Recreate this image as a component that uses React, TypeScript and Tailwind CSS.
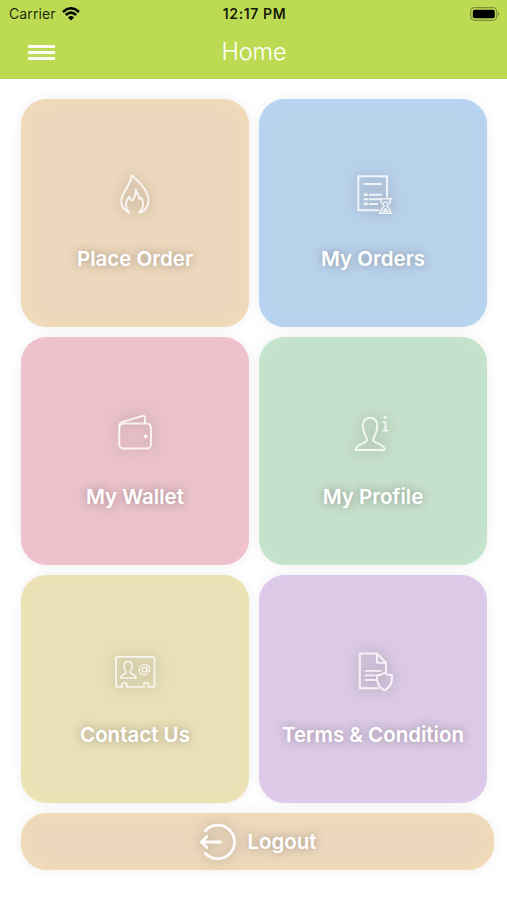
import type { ReactNode } from "react";

function FlameIcon() {
  return (
    <>
      <path d="M17 41C12 38 9.8 33.5 10.4 28.5C11.2 20.5 19.8 14.8 20.6 4.2C27 9.5 36.8 18.5 37.4 28.5C37.7 34.5 34.5 39.5 28.5 41.7" />
      <path d="M18.2 41.5C14.2 37 13.8 31.5 18 25.8L21 29.8C23.9 26.5 24.9 23 24.7 18.2C26.5 22 27.6 25 28.5 28L30.2 26.8C32.3 30 32.5 33.5 31.5 36.5C30.8 38.7 29.5 40.3 28 41.5" />
    </>
  );
}

function OrdersIcon() {
  return (
    <>
      <path d="M29.5 39.2H9.3V5.3H38V26" />
      <path d="M15.5 13H32M20.5 23.7H32.5M20.5 28.2H30M20.5 32.9H28.5" />
      <path d="M15.8 23.7H17.8M15.8 28.2H17.8M15.8 32.9H17.8" strokeWidth="2.6" />
      <path d="M30.2 27.7H43M30.2 42.3H43M32 28V31.2L35.3 35L32 38.8V42M41.2 28V31.2L37.9 35L41.2 38.8V42M34.3 40.3L36.6 37.7L38.9 40.3Z" strokeWidth="1.6" />
      <path d="M34.5 31.5H38.7" strokeWidth="1.6" />
    </>
  );
}

function WalletIcon() {
  return (
    <>
      <rect x="8.2" y="14.4" width="31.8" height="25.2" rx="4.6" />
      <path d="M8.4 17.5C8.2 14.5 9.6 13.4 12 12.7L31.5 7C33 6.6 34 7 34 8.5V14" />
      <circle cx="34.5" cy="27.2" r="1.5" fill="currentColor" strokeWidth="1" />
    </>
  );
}

function ProfileIcon() {
  return (
    <>
      <path d="M18 30.8C18 28 13.8 24 13.8 17.4C13.8 11.7 16.5 8.8 21 8.8C25.5 8.8 28.3 11.7 28.3 17.4C28.3 24 24.2 28 24.2 30.8C24.2 35.2 35.7 33.5 35.7 41H6.7C6.7 33.5 18 35.2 18 30.8Z" />
      <path d="M34.2 13.2H36.4V21.5M34 21.7H38.6" strokeWidth="1.8" />
      <circle cx="36.2" cy="8.2" r="1.5" fill="currentColor" stroke="none" />
    </>
  );
}

function ContactIcon() {
  return (
    <>
      <path d="M11 40H7C5.8 40 5 39.2 5 38V11.8C5 10.6 5.8 9.8 7 9.8H41.5C42.7 9.8 43.5 10.6 43.5 11.8V38C43.5 39.2 42.7 40 41.5 40H37.5V37.8C37.5 34.7 32.8 34.7 32.8 37.8V40H15.8V37.8C15.8 34.7 11 34.7 11 37.8V40" strokeWidth="1.7" />
      <path d="M15.2 24.5C13.5 23 13 20.8 13 19C13 16 14.6 14.5 17.2 14.5C19.8 14.5 21.4 16 21.4 19C21.4 20.8 20.9 23 19.2 24.5C19 28.1 24.9 26.8 24.9 31H9.6C9.6 26.8 15.4 28.1 15.2 24.5Z" strokeWidth="1.6" />
      <circle cx="33.4" cy="22.7" r="2.3" strokeWidth="1.3" />
      <path d="M35.7 20.3V23.5C35.7 25.7 38.6 25.5 38.6 22.5C38.6 19.7 36.5 17.7 33.4 17.7C30.4 17.7 28.2 20 28.2 22.8C28.2 27.1 32.2 29 36 27" strokeWidth="1.3" />
    </>
  );
}

function TermsIcon() {
  return (
    <>
      <path d="M29 41.2H10.8V6.5H28L37 15.8V25M28 6.8V15.8H36.7" />
      <path d="M16.5 23.8H31.5M16.5 28.3H26M16.5 33H26" strokeWidth="1.8" />
      <path d="M35.5 25.7C33.3 27.5 31 28.2 28 28.3C27.6 35.7 29.7 40.8 35.5 43.3C41.3 40.8 43.4 35.7 43 28.3C40 28.2 37.7 27.5 35.5 25.7Z" />
    </>
  );
}

interface TileProps {
  label: string;
  color: string;
  children: ReactNode;
}

function Tile({ label, color, children }: TileProps) {
  return (
    <button className={`flex h-[228px] flex-col items-center rounded-[26px] pt-[72px] ${color}`}>
      <svg
        viewBox="0 0 48 48"
        className="size-12 overflow-visible text-white/80 drop-shadow-[0_0_7px_rgba(90,80,80,0.6)]"
        fill="none"
        stroke="currentColor"
        strokeWidth="2"
        strokeLinecap="round"
        strokeLinejoin="round"
      >
        {children}
      </svg>
      <span className="mt-[26px] whitespace-nowrap text-[20.5px] font-semibold leading-7 text-white [text-shadow:0_0_9px_rgba(90,80,80,0.5)]">
        {label}
      </span>
    </button>
  );
}

export default function App() {
  return (
    <div className="min-h-[900px] w-[507px] overflow-hidden bg-white font-['Inter','Liberation_Sans',sans-serif]">
      <header className="h-[79px] bg-[#bddb52]">
        <div className="grid h-[27px] grid-cols-3 items-center pl-[9px] pr-[7px] text-black/85">
          <div className="flex items-center gap-[6px]">
            <span className="text-[14px] tracking-[0.1px]">Carrier</span>
            <svg viewBox="0 0 18 14" className="h-[14px] w-[18px] text-black" fill="none" stroke="currentColor" strokeWidth="2.5">
              <path d="M1 5Q9 -2.4 17 5M3.8 8Q9 3.3 14.2 8" />
              <path d="M9 13.5L6 10.4Q9 7.8 12 10.4Z" fill="currentColor" stroke="none" />
            </svg>
          </div>
          <span className="text-center text-[14px] font-semibold tracking-[0.6px] text-black/90">12:17 PM</span>
          <svg viewBox="0 0 30 14" className="h-[14px] w-[30px] justify-self-end">
            <rect x="0.7" y="0.7" width="26" height="12.6" rx="3.8" fill="none" stroke="#7c9038" strokeWidth="1.2" />
            <rect x="2.8" y="2.7" width="22" height="8.6" rx="2" fill="#000" />
            <path d="M28 4.7Q30.6 7 28 9.3Z" fill="#7c9038" />
          </svg>
        </div>
        <div className="grid grid-cols-3 items-center pl-[28px] pr-[27px]">
          <div className="flex w-[27px] flex-col gap-[3px] pt-[8px]">
            <span className="h-[3px] bg-white/95" />
            <span className="h-[3px] bg-white/95" />
            <span className="h-[3px] bg-white/95" />
          </div>
          <h1 className="pt-[8px] text-center text-[23.5px] font-light leading-[34px] tracking-[-0.1px] text-white">Home</h1>
        </div>
      </header>

      <main className="pl-[21px] pt-5">
        <div className="grid w-[466px] grid-cols-2 gap-[10px]">
          <Tile label="Place Order" color="bg-[#ecd8bc] shadow-[0_0_12px_rgba(0,0,0,0.07),inset_0_0_14px_#f4dcb3]">
            <FlameIcon />
          </Tile>
          <Tile label="My Orders" color="bg-[#b9d2ec] shadow-[0_0_12px_rgba(0,0,0,0.07),inset_0_0_14px_#b6d5f6]">
            <OrdersIcon />
          </Tile>
          <Tile label="My Wallet" color="bg-[#ebc2ca] shadow-[0_0_12px_rgba(0,0,0,0.07),inset_0_0_14px_#f5c0cf]">
            <WalletIcon />
          </Tile>
          <Tile label="My Profile" color="bg-[#c5e0cb] shadow-[0_0_12px_rgba(0,0,0,0.07),inset_0_0_14px_#c4e9cd]">
            <ProfileIcon />
          </Tile>
          <Tile label="Contact Us" color="bg-[#e9e0b8] shadow-[0_0_12px_rgba(0,0,0,0.07),inset_0_0_14px_#f0e5b0]">
            <ContactIcon />
          </Tile>
          <Tile label="Terms & Condition" color="bg-[#dbc9e5] shadow-[0_0_12px_rgba(0,0,0,0.07),inset_0_0_14px_#e0caee]">
            <TermsIcon />
          </Tile>
        </div>
        <button className="mt-[10px] flex h-[57px] w-[473px] items-center justify-center gap-[9px] rounded-[26px] bg-[#ecd8bc] pt-px shadow-[0_0_12px_rgba(0,0,0,0.07),inset_0_0_14px_#f4dcb3]">
          <svg
            viewBox="0 0 40 40"
            className="size-10 overflow-visible text-white/95 drop-shadow-[0_0_6px_rgba(90,80,80,0.5)]"
            fill="none"
            stroke="currentColor"
            strokeWidth="2.8"
            strokeLinecap="round"
            strokeLinejoin="round"
          >
            <path d="M7.3 8.7A16.8 16.8 0 1 1 7.3 31.3M22.5 20H3.5M9 14.5L3.3 20L9 25.5" />
          </svg>
          <span className="text-[20.5px] font-semibold leading-7 text-white [text-shadow:0_0_9px_rgba(90,80,80,0.5)]">Logout</span>
        </button>
      </main>
    </div>
  );
}
